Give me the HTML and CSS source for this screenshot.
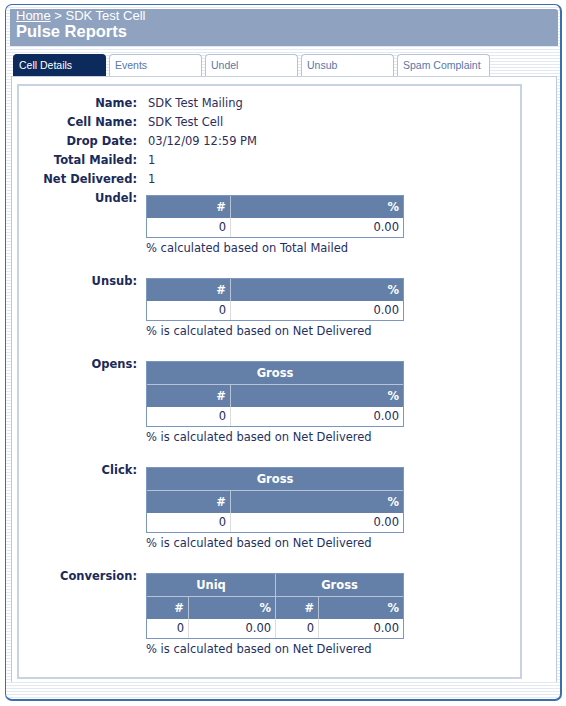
FILE: index.html
```html
<!DOCTYPE html>
<html>
<head>
<meta charset="utf-8">
<title>Pulse Reports</title>
<link rel="stylesheet" href="styles.css">
</head>
<body>
<div class="frame">
  <div class="header">
    <div class="crumb"><a href="#">Home</a> &gt; SDK Test Cell</div>
    <div class="title">Pulse Reports</div>
  </div>
  <div class="tabs">
    <div class="tab active">Cell Details</div>
    <div class="tab">Events</div>
    <div class="tab">Undel</div>
    <div class="tab">Unsub</div>
    <div class="tab">Spam Complaint</div>
  </div>
  <div class="panel">
    <div class="box">
      <div class="details">
        <div class="lbl">Name:</div><div class="val">SDK Test Mailing</div>
        <div class="lbl">Cell Name:</div><div class="val">SDK Test Cell</div>
        <div class="lbl">Drop Date:</div><div class="val">03/12/09 12:59 PM</div>
        <div class="lbl">Total Mailed:</div><div class="val">1</div>
        <div class="lbl">Net Delivered:</div><div class="val">1</div>

        <div class="lbl sec">Undel:</div>
        <div class="secval">
          <table class="stats">
            <colgroup><col class="c1"><col></colgroup>
            <tr class="hrow"><th>#</th><th>%</th></tr>
            <tr><td>0</td><td>0.00</td></tr>
          </table>
          <div class="note">% calculated based on Total Mailed</div>
        </div>

        <div class="lbl sec">Unsub:</div>
        <div class="secval">
          <table class="stats">
            <colgroup><col class="c1"><col></colgroup>
            <tr class="hrow"><th>#</th><th>%</th></tr>
            <tr><td>0</td><td>0.00</td></tr>
          </table>
          <div class="note">% is calculated based on Net Delivered</div>
        </div>

        <div class="lbl sec">Opens:</div>
        <div class="secval">
          <table class="stats">
            <colgroup><col class="c1"><col></colgroup>
            <tr class="grow"><th colspan="2" class="center">Gross</th></tr>
            <tr class="hrow"><th>#</th><th>%</th></tr>
            <tr><td>0</td><td>0.00</td></tr>
          </table>
          <div class="note">% is calculated based on Net Delivered</div>
        </div>

        <div class="lbl sec">Click:</div>
        <div class="secval">
          <table class="stats">
            <colgroup><col class="c1"><col></colgroup>
            <tr class="grow"><th colspan="2" class="center">Gross</th></tr>
            <tr class="hrow"><th>#</th><th>%</th></tr>
            <tr><td>0</td><td>0.00</td></tr>
          </table>
          <div class="note">% is calculated based on Net Delivered</div>
        </div>

        <div class="lbl sec">Conversion:</div>
        <div class="secval">
          <table class="stats">
            <colgroup><col class="k1"><col class="k2"><col class="k3"><col></colgroup>
            <tr class="grow"><th colspan="2" class="center">Uniq</th><th colspan="2" class="center">Gross</th></tr>
            <tr class="hrow"><th>#</th><th>%</th><th>#</th><th>%</th></tr>
            <tr><td>0</td><td>0.00</td><td>0</td><td>0.00</td></tr>
          </table>
          <div class="note">% is calculated based on Net Delivered</div>
        </div>
      </div>
    </div>
  </div>
</div>
</body>
</html>
```
FILE: styles.css
```css
html, body {
  margin: 0;
  padding: 0;
  background: #ffffff;
}

.frame {
  box-sizing: border-box;
  margin: 4px 0 0 5px;
  width: 557px;
  height: 697px;
  padding: 4px 2px 0 4px;
  border-style: solid;
  border-color: #3c6dad;
  border-width: 1px 2px 2px 1px;
  border-radius: 7px;
  background: repeating-linear-gradient(to bottom, #ffffff 0, #ffffff 2px, #e2e9f3 2px, #e2e9f3 3px);
}

.header {
  box-sizing: border-box;
  height: 37px;
  background: #8fa3c1;
  border-top-right-radius: 3px;
  padding: 0 0 0 6px;
  color: #ffffff;
  font-family: "Liberation Sans", Arial, sans-serif;
}

.crumb {
  font-size: 13px;
  line-height: 14px;
}

.crumb a {
  color: #ffffff;
  text-decoration: underline;
}

.title {
  font-size: 16.5px;
  line-height: 17px;
  font-weight: bold;
}

.tabs {
  display: flex;
  margin: 8px 0 0 3px;
  height: 22px;
  position: relative;
  z-index: 1;
}

.tab {
  box-sizing: border-box;
  width: 93px;
  height: 22px;
  margin-right: 3px;
  padding-left: 5px;
  border: 1px solid #b6c4d9;
  border-bottom: none;
  border-radius: 4px 4px 0 0;
  background: #ffffff;
  color: #5877a9;
  font-family: "Liberation Sans", Arial, sans-serif;
  font-size: 10.5px;
  line-height: 21px;
}

.tab.active {
  background: #0c2b5c;
  border-color: #0c2b5c;
  color: #ffffff;
}

.panel {
  box-sizing: border-box;
  height: 606px;
  margin: 0 1px;
  background: #ffffff;
  border-top: 1px solid #c6d0de;
  border-left: 1px solid #bfc9d7;
  border-right: 1px solid #bfc9d7;
  padding: 7px 0 0 5px;
}

.box {
  box-sizing: border-box;
  width: 505px;
  height: 595px;
  border: 2px solid #c8d3e2;
  padding-top: 8px;
  font-family: "DejaVu Sans", Verdana, sans-serif;
  font-size: 11.5px;
}

.details {
  display: grid;
  grid-template-columns: 118px 1fr;
  column-gap: 9px;
}

.lbl {
  text-align: right;
  font-weight: bold;
  color: #1b2a58;
  line-height: 19px;
}

.val {
  padding-left: 2px;
  color: #2e2e5a;
  line-height: 19px;
}

.lbl.sec {
  line-height: 15px;
  padding-top: 2px;
}

.secval {
  padding-top: 6px;
  padding-bottom: 16px;
}

.stats {
  border-collapse: separate;
  border-spacing: 0;
  table-layout: fixed;
  width: 258px;
  border: 1px solid #7b97bf;
}

.stats col.c1 { width: 83px; }
.stats col.k1 { width: 41px; }
.stats col.k2 { width: 87px; }
.stats col.k3 { width: 43px; }

.stats th {
  background: #6480a8;
  color: #ffffff;
  font-weight: bold;
  text-align: right;
  height: 22px;
  padding: 0 4px;
  line-height: 22px;
}

.stats th.center {
  text-align: center;
}

.stats .grow th {
  height: 22px;
  line-height: 21px;
  border-bottom: 1px solid #b7c4d7;
}

.stats th + th {
  border-left: 1px solid #b7c4d7;
}

.stats td {
  background: #ffffff;
  color: #1b2a58;
  text-align: right;
  height: 19px;
  padding: 0 4px;
  line-height: 19px;
}

.stats td + td {
  border-left: 1px solid #dcdcdc;
}

.note {
  padding-top: 2px;
  line-height: 16px;
  color: #1f3062;
}
```
